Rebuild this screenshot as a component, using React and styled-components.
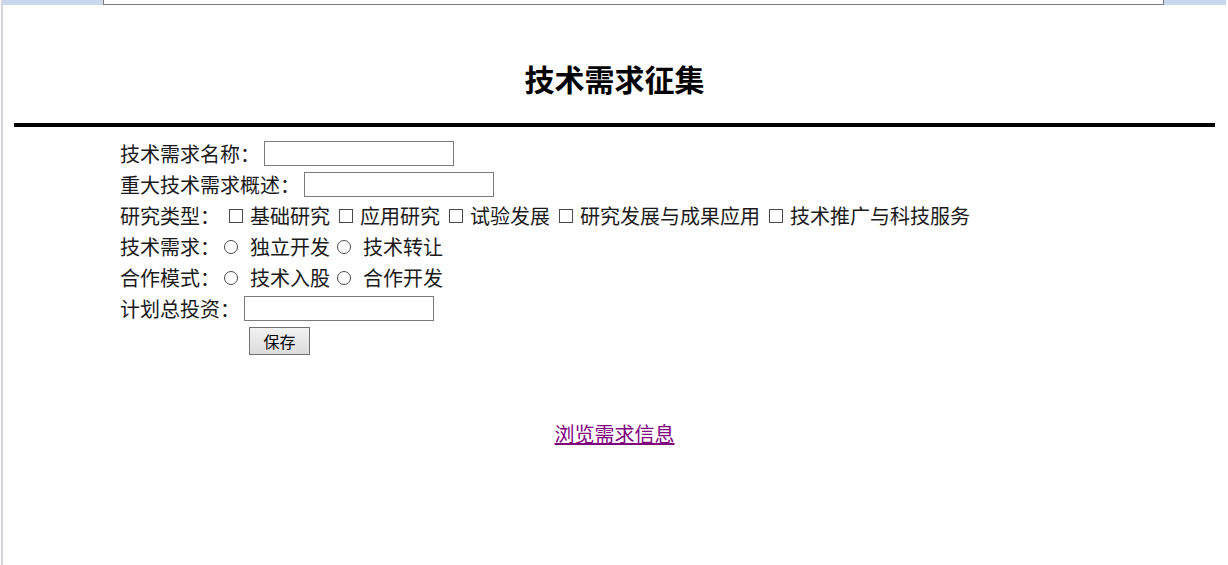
import React from 'react';
import styled, { createGlobalStyle } from 'styled-components';

const GlobalStyle = createGlobalStyle`
  html, body {
    margin: 0;
    padding: 0;
    background: #fff;
  }
  body {
    font-family: "Noto Sans CJK SC", "Liberation Serif", serif;
    color: #1a1a1a;
  }
`;

const researchTypes = ['基础研究', '应用研究', '试验发展', '研究发展与成果应用', '技术推广与科技服务'];

const App = () => {
  return (
    <Page>
      <GlobalStyle />
      <TopBar>
        <TopTab />
        <TopBox />
        <TopTab $right />
      </TopBar>
      <Main>
        <Title>技术需求征集</Title>
        <Rule />
        <Form onSubmit={(e) => e.preventDefault()}>
          <Row>
            <Label>技术需求名称：</Label>
            <TextInput type="text" />
          </Row>
          <Row>
            <Label>重大技术需求概述：</Label>
            <TextInput type="text" />
          </Row>
          <Row>
            <Label>研究类型：</Label>
            {researchTypes.map((t) => (
              <CheckOption key={t}>
                <CheckBox type="checkbox" />
                <OptionText>{t}</OptionText>
              </CheckOption>
            ))}
          </Row>
          <Row>
            <Label>技术需求：</Label>
            <RadioOption>
              <Radio type="radio" name="need" />
              <OptionText $wide>独立开发</OptionText>
            </RadioOption>
            <RadioOption>
              <Radio type="radio" name="need" />
              <OptionText $wide>技术转让</OptionText>
            </RadioOption>
          </Row>
          <Row>
            <Label>合作模式：</Label>
            <RadioOption>
              <Radio type="radio" name="mode" />
              <OptionText $wide>技术入股</OptionText>
            </RadioOption>
            <RadioOption>
              <Radio type="radio" name="mode" />
              <OptionText $wide>合作开发</OptionText>
            </RadioOption>
          </Row>
          <Row>
            <Label>计划总投资：</Label>
            <TextInput type="text" />
          </Row>
          <ButtonRow>
            <SaveButton type="submit">保存</SaveButton>
          </ButtonRow>
        </Form>
        <LinkWrap>
          <BrowseLink href="#">浏览需求信息</BrowseLink>
        </LinkWrap>
      </Main>
    </Page>
  );
};

export default App;

const Page = styled.div`
  min-height: 100vh;
  margin-left: 1px;
  border-left: 2px solid #d4d4e4;
  box-sizing: border-box;
`;

const TopBar = styled.div`
  display: flex;
  height: 5px;
`;

const TopTab = styled.div`
  width: ${(p) => (p.$right ? '62px' : '100px')};
  margin-right: ${(p) => (p.$right ? '2px' : '0')};
  background: #c9d8ec;
`;

const TopBox = styled.div`
  flex: 1;
  background: #fff;
  border: 1px solid #7a7a7a;
  border-top: none;
  box-sizing: border-box;
`;

const Main = styled.div`
  padding: 0 13px 0 11px;
`;

const Title = styled.h1`
  margin: 0;
  padding-top: 55px;
  font-size: 30px;
  line-height: 36px;
  font-weight: bold;
  text-align: center;
  color: #000;
`;

const Rule = styled.div`
  margin-top: 27px;
  height: 4px;
  background: #000;
`;

const Form = styled.form`
  margin-top: 11px;
  padding-left: 106px;
`;

const Row = styled.div`
  display: flex;
  align-items: center;
  height: 31px;
  font-size: 20px;
  white-space: nowrap;
`;

const Label = styled.span`
  line-height: 1;
`;

const TextInput = styled.input`
  margin: 0 0 0 4px;
  width: 190px;
  height: 25px;
  box-sizing: border-box;
  border: 1px solid #7b7b7b;
  background: #fff;
  font-size: 14px;
`;

const CheckOption = styled.label`
  display: flex;
  align-items: center;
  margin-left: 9px;
  & + & {
    margin-left: 9px;
  }
`;

const RadioOption = styled.label`
  display: flex;
  align-items: center;
  margin-left: 4px;
  & + & {
    margin-left: 7px;
  }
`;

const CheckBox = styled.input`
  appearance: none;
  margin: 0;
  width: 14px;
  height: 14px;
  border: 1px solid #4a4a4a;
  background: #fff;
  box-sizing: border-box;
`;

const Radio = styled.input`
  appearance: none;
  margin: 0;
  width: 14px;
  height: 14px;
  border: 1px solid #4a4a4a;
  border-radius: 50%;
  background: #fff;
  box-sizing: border-box;
`;

const OptionText = styled.span`
  margin-left: ${(p) => (p.$wide ? '12px' : '7px')};
  line-height: 1;
`;

const ButtonRow = styled.div`
  display: flex;
  height: 31px;
  padding-top: 3px;
  padding-left: 129px;
  box-sizing: border-box;
`;

const SaveButton = styled.button`
  width: 61px;
  height: 28px;
  padding: 0;
  border: 1px solid #707070;
  border-radius: 0;
  background: linear-gradient(#f2f2f2, #dcdcdc);
  font-family: "Noto Sans CJK SC", "Liberation Sans", sans-serif;
  font-size: 16px;
  color: #000;
`;

const LinkWrap = styled.div`
  margin-top: 67px;
  text-align: center;
  font-size: 20px;
  line-height: 24px;
`;

const BrowseLink = styled.a`
  color: #800080;
  text-decoration: underline;
`;
